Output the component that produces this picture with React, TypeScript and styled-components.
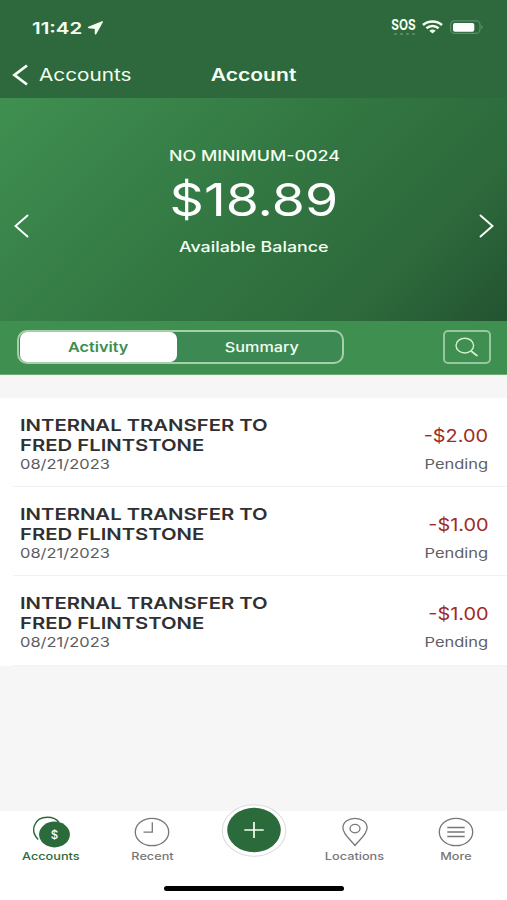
import React from "react";
import styled, { createGlobalStyle } from "styled-components";

const Global = createGlobalStyle`
  * { box-sizing: border-box; }
  body { margin: 0; background: #f6f6f7; font-family: Inter, "Liberation Sans", sans-serif; }
  button { font: inherit; border: 0; padding: 0; margin: 0; background: none; }
`;

type LabelProps = {
  $size: number;
  $weight?: number;
  $line: number;
  $stretch?: number;
  $origin?: "left" | "center" | "right";
  $color?: string;
};

const Label = styled.span<LabelProps>`
  display: block;
  white-space: nowrap;
  font-size: ${(p) => p.$size}px;
  font-weight: ${(p) => p.$weight ?? 400};
  line-height: ${(p) => p.$line}px;
  color: ${(p) => p.$color ?? "#f4fff2"};
  transform: scaleX(${(p) => p.$stretch ?? 1.2});
  transform-origin: ${(p) => p.$origin ?? "center"} center;
`;

const Screen = styled.div`
  width: 507px;
  height: 900px;
  display: flex;
  flex-direction: column;
  background: #f6f6f7;
  overflow: hidden;
`;

const Header = styled.header`
  height: 98px;
  flex: none;
  background: #2d693c;
`;

const StatusBar = styled.div`
  height: 54px;
  padding: 0 23px 0 32px;
  display: flex;
  align-items: center;
  justify-content: space-between;
`;

const Clock = styled.div`
  width: 72px;
  padding-top: 1px;
  display: flex;
  align-items: center;
  justify-content: space-between;
`;

const Indicators = styled.div`
  display: flex;
  align-items: center;
`;

const Sos = styled.div`
  width: 24px;
  height: 17px;
  margin-right: 6px;
  display: flex;
  flex-direction: column;
  align-items: center;
`;

const Dots = styled.div`
  display: flex;
  gap: 3px;
  margin-top: 2px;
  i {
    width: 3px;
    height: 2px;
    border-radius: 1px;
    background: #5f8d69;
  }
`;

const NavBar = styled.nav`
  height: 41px;
  display: grid;
  grid-template-columns: 1fr auto 1fr;
  align-items: center;
  padding: 0 11px 0 12px;
`;

const Back = styled.button`
  display: flex;
  align-items: center;
  gap: 11px;
`;

const Hero = styled.section`
  height: 223px;
  flex: none;
  display: flex;
  align-items: center;
  justify-content: space-between;
  padding: 0 13px 0 14px;
  background: linear-gradient(135deg, #3f9050 0%, #3a854b 20%, #337843 45%, #2d693b 78%, #235331 100%);
`;

const Arrow = styled.button`
  display: flex;
  padding-top: 32px;
`;

const Balance = styled.div`
  height: 223px;
  padding-top: 48px;
  display: flex;
  flex-direction: column;
  align-items: center;
`;

const Toolbar = styled.div`
  height: 54px;
  flex: none;
  display: flex;
  align-items: center;
  justify-content: space-between;
  padding: 0 16px 2px 17px;
  background: #3f8f50;
  border-bottom: 1px solid #6fab7b;
`;

const Segments = styled.div`
  width: 327px;
  height: 34px;
  padding: 0 0 0 1px;
  display: flex;
  border: 2px solid #a5d0ab;
  border-radius: 10px;
  background: #3d8953;
`;

const Segment = styled.button<{ $active?: boolean }>`
  flex: ${(p) => (p.$active ? "0 0 157px" : "1")};
  display: flex;
  align-items: center;
  justify-content: center;
  padding-top: 1px;
  padding-left: ${(p) => (p.$active ? 0 : 4)}px;
  border-radius: 7px;
  background: ${(p) => (p.$active ? "#fff" : "transparent")};
`;

const SearchButton = styled.button`
  width: 48px;
  height: 34px;
  display: flex;
  align-items: center;
  justify-content: center;
  border: 2px solid #97c79e;
  border-radius: 5px;
`;

const List = styled.main`
  flex: 1;
  padding-top: 23px;
`;

const Row = styled.article`
  height: 89.2px;
  padding: 17px 18.5px 0 19.5px;
  display: flex;
  justify-content: space-between;
  background: linear-gradient(#f2f2f2, #f2f2f2) 13px bottom / 100% 1px no-repeat #fff;
`;

const Side = styled.div`
  padding-top: 11px;
  display: flex;
  flex-direction: column;
  align-items: flex-end;
  gap: 9px;
`;

const TabBar = styled.footer`
  height: 89px;
  flex: none;
  background: #fff;
`;

const Tabs = styled.div`
  height: 75px;
  display: grid;
  grid-template-columns: repeat(5, 1fr);
`;

const Tab = styled.button`
  display: flex;
  flex-direction: column;
  align-items: center;
  padding-top: 4px;
  svg { margin-bottom: 1px; }
`;

const AddTab = styled.button`
  display: flex;
  justify-content: center;
  align-items: flex-start;
  margin-top: -7px;
  padding-left: 2px;
  svg { flex: none; }
`;

const HomeIndicator = styled.div`
  width: 180px;
  height: 5px;
  margin: 0 auto;
  border-radius: 3px;
  background: #000;
`;

const transfers = [
  { title: ["INTERNAL TRANSFER TO", "FRED FLINTSTONE"], date: "08/21/2023", amount: "-$2.00", status: "Pending" },
  { title: ["INTERNAL TRANSFER TO", "FRED FLINTSTONE"], date: "08/21/2023", amount: "-$1.00", status: "Pending" },
  { title: ["INTERNAL TRANSFER TO", "FRED FLINTSTONE"], date: "08/21/2023", amount: "-$1.00", status: "Pending" },
];

const GREY = "#77777a";
const GREEN = "#2b6a3b";

const TabLabel = ({ children, color = GREY }: { children: string; color?: string }) => (
  <Label $size={10.5} $weight={500} $line={14} $stretch={1.21} $color={color}>{children}</Label>
);

export default function App() {
  return (
    <>
      <Global />
      <Screen>
        <Header>
          <StatusBar>
            <Clock>
              <Label $size={16} $weight={600} $line={20} $stretch={1.28} $origin="left">11:42</Label>
              <svg width="17" height="14" viewBox="0 0 17 14">
                <path d="M15.200 1 1.600 6.400l6.900.8v5.600z" fill="#f4fff2" stroke="#f4fff2" strokeWidth="1.500" strokeLinejoin="round" />
              </svg>
            </Clock>
            <Indicators>
              <Sos>
                <Label $size={14} $weight={700} $line={12} $stretch={0.84}>SOS</Label>
                <Dots><i /><i /><i /><i /></Dots>
              </Sos>
              <svg width="21" height="14" viewBox="0 0 21 14" fill="none" stroke="#f4fff2" strokeWidth="2.5">
                <path d="M1 5C6.2.2 14.8.2 20 5M4.400 8.300C7.900 5.300 13.100 5.300 16.600 8.300" />
                <path d="M7.300 10.700c1.800-1.600 4.600-1.600 6.400 0L10.500 13.500z" fill="#f4fff2" stroke="none" />
              </svg>
              <svg width="41" height="14" viewBox="0 0 41 14">
                <rect x="7.600" y=".900" width="29.400" height="12.400" rx="3.800" fill="none" stroke="#5f8d69" strokeWidth="1.200" />
                <rect x="10" y="2.900" width="21.300" height="8.800" rx="2" fill="#fff" />
                <path d="M38.500 5.300c1.600.6 1.600 3 0 3.600z" fill="#6f9a77" />
              </svg>
            </Indicators>
          </StatusBar>
          <NavBar>
            <Back>
              <svg width="16" height="22" viewBox="0 0 16 22" fill="none" stroke="#f8fff6" strokeWidth="2.8">
                <path d="M15 1.5 2.5 11 15 20.5" />
              </svg>
              <Label $size={17} $line={22} $stretch={1.22} $origin="left">Accounts</Label>
            </Back>
            <Label $size={17} $weight={600} $line={22} $stretch={1.24}>Account</Label>
            <span />
          </NavBar>
        </Header>

        <Hero>
          <Arrow>
            <svg width="15" height="24" viewBox="0 0 15 24" fill="none" stroke="#fff" strokeWidth="1.9" strokeLinecap="round">
              <path d="M13.5 1.5 1.5 12l12 10.5" />
            </svg>
          </Arrow>
          <Balance>
            <Label $size={14.5} $weight={500} $line={20} $stretch={1.23}>NO MINIMUM-0024</Label>
            <Label $size={45} $weight={400} $line={67} $stretch={1.19} $color="#fff">$18.89</Label>
            <Label $size={14.5} $weight={500} $line={27} $stretch={1.23}>Available Balance</Label>
          </Balance>
          <Arrow>
            <svg width="15" height="24" viewBox="0 0 15 24" fill="none" stroke="#fff" strokeWidth="1.9" strokeLinecap="round">
              <path d="m1.5 1.5 12 10.5-12 10.5" />
            </svg>
          </Arrow>
        </Hero>

        <Toolbar>
          <Segments>
            <Segment $active><Label $size={13.5} $weight={600} $line={18} $color="#3a8c51">Activity</Label></Segment>
            <Segment><Label $size={13.5} $weight={500} $line={18}>Summary</Label></Segment>
          </Segments>
          <SearchButton>
            <svg width="24" height="20" viewBox="0 0 24 20" fill="none" stroke="#d5edd2" strokeWidth="1.4">
              <ellipse cx="9.800" cy="8.600" rx="8.800" ry="7.400" />
              <path d="m16 14 6.500 5" strokeWidth="1.7" />
            </svg>
          </SearchButton>
        </Toolbar>

        <List>
          {transfers.map((t, i) => (
            <Row key={i}>
              <div>
                {t.title.map((line) => (
                  <Label key={line} $size={16.5} $weight={600} $line={20} $stretch={1.23} $origin="left" $color="#303033">{line}</Label>
                ))}
                <Label $size={13.5} $line={18} $stretch={1.22} $origin="left" $color="#5c5c60">{t.date}</Label>
              </div>
              <Side>
                <Label $size={17} $line={20} $stretch={1.17} $origin="right" $color="#a02a25">{t.amount}</Label>
                <Label $size={13.5} $line={18} $stretch={1.22} $origin="right" $color="#606064">{t.status}</Label>
              </Side>
            </Row>
          ))}
        </List>

        <TabBar>
          <Tabs>
            <Tab>
              <svg width="38" height="34" viewBox="0 0 38 34">
                <path d="M6.300 24.500C-2.500 16 2 2.300 15.500 2.300c5.500 0 9.500 2.300 11.500 5.200" fill="none" stroke={GREEN} strokeWidth="1.400" />
                <ellipse cx="22.500" cy="19.500" rx="15.400" ry="12.900" fill={GREEN} />
                <text x="22.500" y="23.600" textAnchor="middle" fontFamily="Inter" fontSize="11.500" fontWeight="500" fill="#fff">$</text>
              </svg>
              <TabLabel color={GREEN}>Accounts</TabLabel>
            </Tab>
            <Tab>
              <svg width="36" height="34" viewBox="0 0 36 34" fill="none" stroke={GREY} strokeWidth="1.300">
                <ellipse cx="18" cy="17" rx="16.700" ry="13.700" />
                <path d="M18.300 7.300v9.900H9.500" />
              </svg>
              <TabLabel>Recent</TabLabel>
            </Tab>
            <AddTab>
              <svg width="66" height="54" viewBox="0 0 66 54">
                <ellipse cx="33" cy="26.500" rx="31.700" ry="25.700" fill="#fff" stroke="#dcdcdc" strokeWidth="1.100" />
                <ellipse cx="33" cy="26" rx="26.800" ry="22.200" fill={GREEN} />
                <path d="M23.300 26h19.400M33 18v16" stroke="#f4fff2" strokeWidth="1.700" />
              </svg>
            </AddTab>
            <Tab>
              <svg width="36" height="34" viewBox="0 0 36 34" fill="none" stroke={GREY} strokeWidth="1.300">
                <path d="M18 30.500C14 25 5.900 19.500 5.900 12.700 5.900 7.300 11.200 3.300 18 3.300s12.100 4 12.100 9.400C30.100 19.500 22 25 18 30.500z" />
                <ellipse cx="18" cy="13.600" rx="5" ry="4.200" />
              </svg>
              <TabLabel>Locations</TabLabel>
            </Tab>
            <Tab>
              <svg width="36" height="34" viewBox="0 0 36 34" fill="none" stroke={GREY} strokeWidth="1.300">
                <ellipse cx="18" cy="17" rx="16.700" ry="13.700" />
                <path d="M9.300 12.500h17.400M9.300 17h17.400M9.300 21.500h17.400" />
              </svg>
              <TabLabel>More</TabLabel>
            </Tab>
          </Tabs>
          <HomeIndicator />
        </TabBar>
      </Screen>
    </>
  );
}
